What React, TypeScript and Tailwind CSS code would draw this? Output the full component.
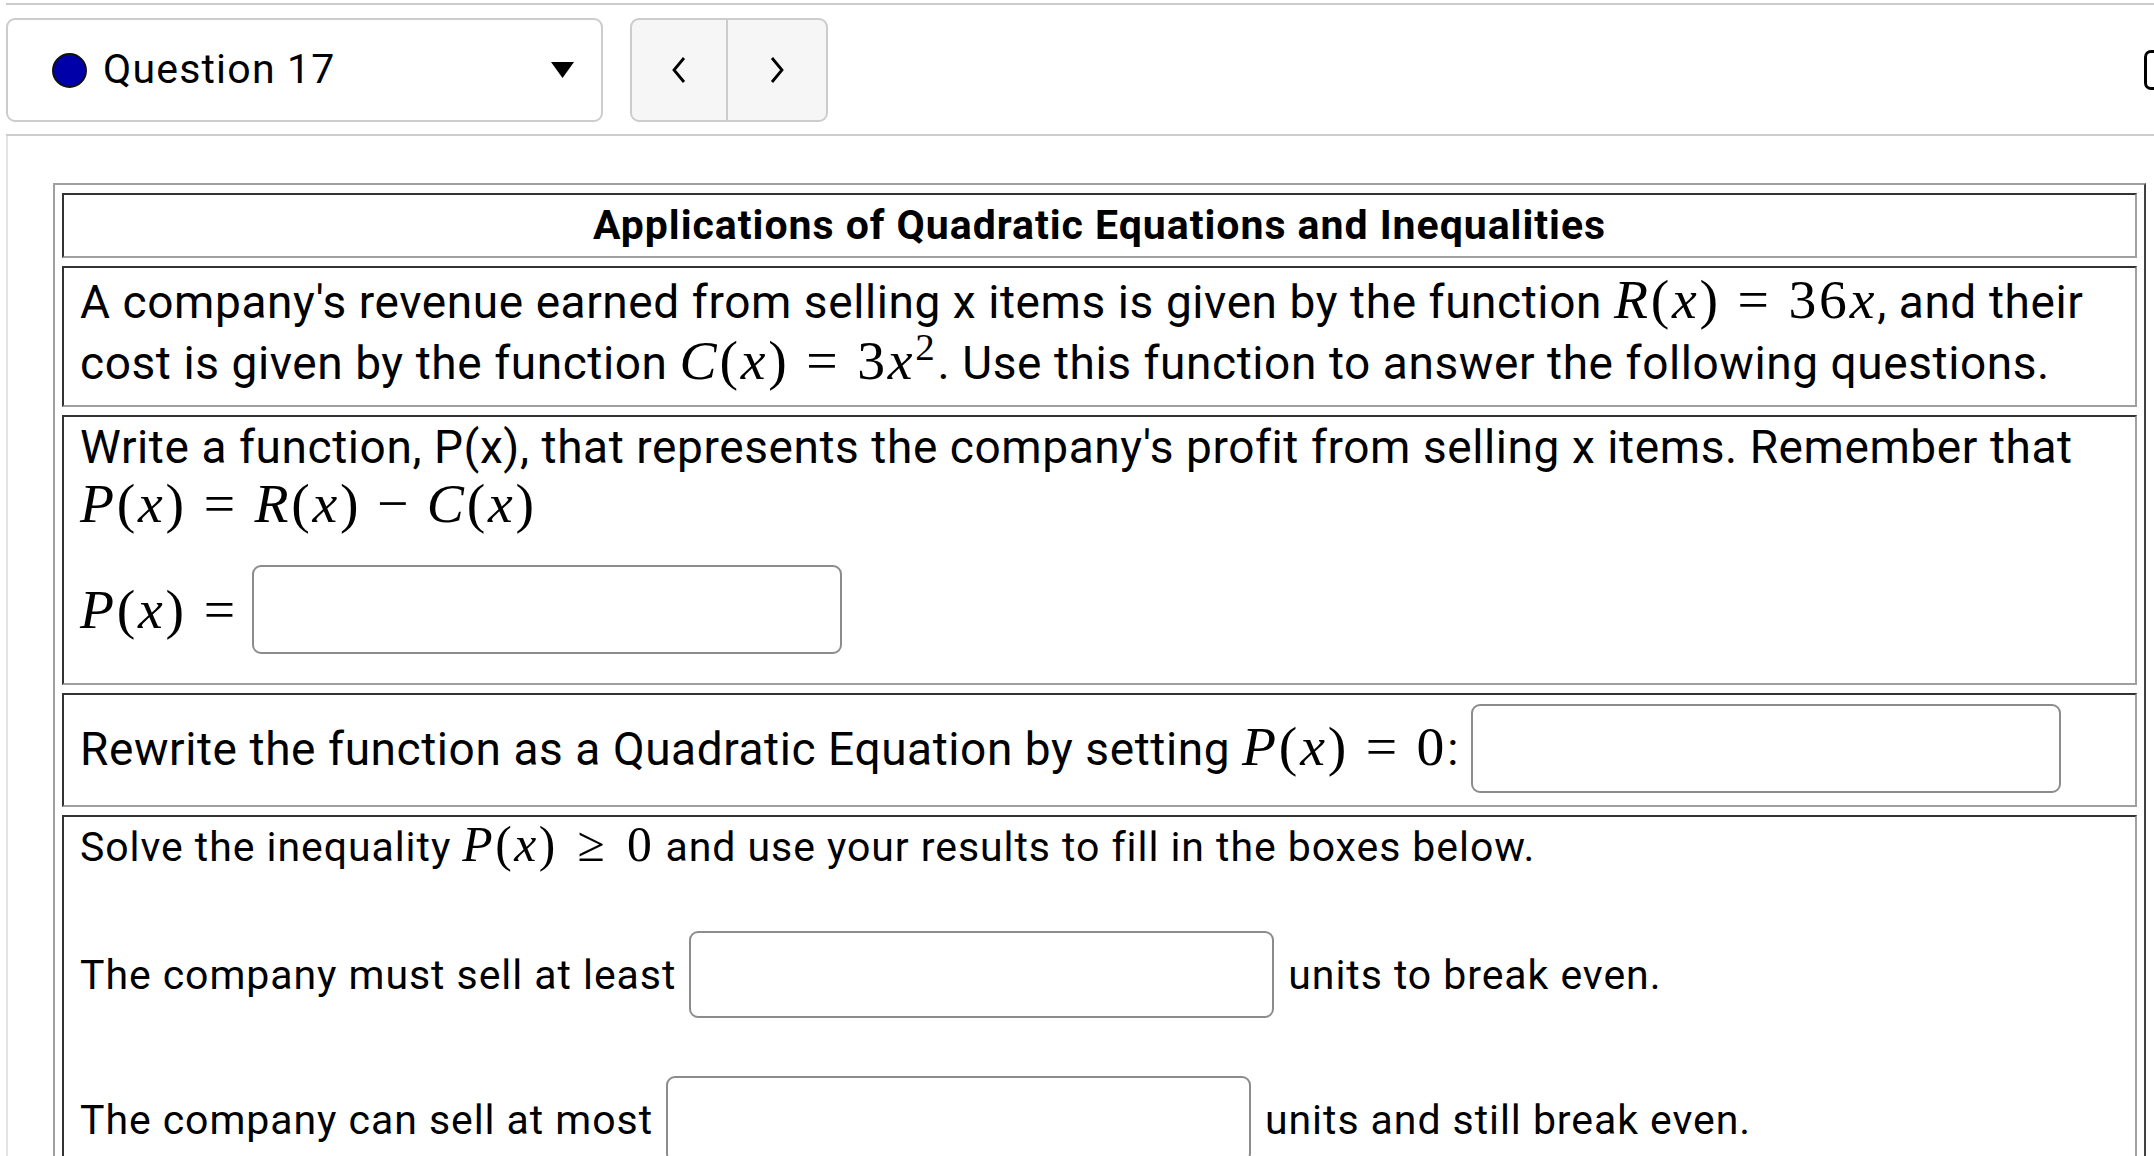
import React from "react";

// math pieces, set in a serif face at KaTeX's 1.21em
function M({ children }: { children: React.ReactNode }) {
  return (
    <span className="whitespace-nowrap font-['Liberation_Serif','DejaVu_Serif',serif] text-[1.21em] leading-none tracking-[0.05em]">
      {children}
    </span>
  );
}

function V({ children }: { children: React.ReactNode }) {
  return <i className="italic">{children}</i>;
}

function Rel({ children, wide = false }: { children: React.ReactNode; wide?: boolean }) {
  return <span className={wide ? "mx-[0.4em]" : "mx-[0.3em]"}>{children}</span>;
}

function Bin({ children }: { children: React.ReactNode }) {
  return <span className="mx-[0.28em]">{children}</span>;
}

function Fn({ n }: { n: string }) {
  return (
    <>
      <V>{n}</V>(<V>x</V>)
    </>
  );
}

function Box({ className = "" }: { className?: string }) {
  return (
    <input
      type="text"
      className={`shrink-0 rounded-[9px] border-2 border-[#8c8c8c] bg-white outline-none ${className}`}
    />
  );
}

const cell =
  "border-2 border-t-[#333333] border-l-[#333333] border-r-[#a0a0a0] border-b-[#a0a0a0] bg-white";

export default function App() {
  return (
    <div className="min-h-screen w-full overflow-hidden bg-white font-['Roboto','Liberation_Sans',sans-serif] text-black">
      {/* Header */}
      <div className="ml-[6px] mt-[3px] flex items-center border-y-2 border-[#cccccc] pb-[12px] pt-[13px]">
        <div className="flex h-[104px] w-[597px] items-center rounded-[9px] border-2 border-[#cccccc] pl-[44px] pr-[27px]">
          <span className="h-[35px] w-[35px] shrink-0 rounded-full border-2 border-[#111111] bg-[#0000a8]" />
          <span className="ml-[16px] text-[41px] tracking-[1.2px]">Question 17</span>
          <svg className="ml-auto" width="23" height="16" viewBox="0 0 23 16">
            <polygon points="0,0 23,0 11.5,16" fill="#000" />
          </svg>
        </div>
        <div className="ml-[27px] flex h-[104px] w-[198px] rounded-[9px] border-2 border-[#cccccc] bg-[#f6f6f6]">
          <button className="flex w-[96px] items-center justify-center border-r-2 border-[#cccccc]">
            <svg width="20" height="28" viewBox="0 0 20 28">
              <polyline points="15,2 5,14 15,26" fill="none" stroke="#000" strokeWidth="2.8" />
            </svg>
          </button>
          <button className="flex flex-1 items-center justify-center">
            <svg width="20" height="28" viewBox="0 0 20 28">
              <polyline points="5,2 15,14 5,26" fill="none" stroke="#000" strokeWidth="2.8" />
            </svg>
          </button>
        </div>
        <div className="ml-auto h-[40px] w-[10px] rounded-l-[7px] border-y-[3px] border-l-[3px] border-black" />
      </div>

      {/* Question body */}
      <div className="ml-[6px] border-l-2 border-[#e3e3e3] pl-[45px] pt-[47px]">
        <div className="flex w-[2093px] flex-col gap-[8px] border-2 border-b-[#404040] border-l-[#a0a0a0] border-r-[#404040] border-t-[#a0a0a0] px-[7px] py-[8px]">
          {/* Title */}
          <div className={`${cell} h-[65px] text-center text-[41px] font-bold leading-[61px] tracking-[0.97px]`}>
            Applications of Quadratic Equations and Inequalities
          </div>

          {/* Intro */}
          <div className={`${cell} h-[141px] px-[16px] pt-[4px] text-[46px] leading-[61px] tracking-[0.58px]`}>
            A company's revenue earned from selling x items is given by the function{" "}
            <M>
              <Fn n="R" />
              <Rel>=</Rel>36<V>x</V>
            </M>
            , and their
            <br />
            cost is given by the function{" "}
            <M>
              <Fn n="C" />
              <Rel>=</Rel>3<V>x</V>
              <sup className="text-[0.7em]">2</sup>
            </M>
            . Use this function to answer the following questions.
          </div>

          {/* P(x) */}
          <div className={`${cell} h-[270px] px-[16px] pt-[2px] text-[46px] leading-[57px] tracking-[0.58px]`}>
            <div>
              Write a function, P(x), that represents the company's profit from selling x items. Remember that
              <br />
              <M>
                <Fn n="P" />
                <Rel>=</Rel>
                <Fn n="R" />
                <Bin>−</Bin>
                <Fn n="C" />
              </M>
            </div>
            <div className="mt-[30px] flex items-center">
              <M>
                <Fn n="P" />
                <span className="ml-[0.3em]">=</span>
              </M>
              <Box className="ml-[14px] h-[89px] w-[590px]" />
            </div>
          </div>

          {/* Quadratic equation */}
          <div className={`${cell} flex h-[114px] items-center px-[16px] pb-[4px] text-[46px] leading-[57px] tracking-[0.58px]`}>
            <span>
              Rewrite the function as a Quadratic Equation by setting{" "}
              <M>
                <Fn n="P" />
                <Rel>=</Rel>0
              </M>
              :
            </span>
            <Box className="ml-[12px] h-[89px] w-[590px]" />
          </div>

          {/* Inequality */}
          <div className={`${cell} px-[16px] pb-[40px] pt-[3px] text-[41px] leading-[52px] tracking-[0.94px]`}>
            <div>
              Solve the inequality{" "}
              <M>
                <Fn n="P" />
                <Rel wide>≥</Rel>0
              </M>{" "}
              and use your results to fill in the boxes below.
            </div>
            <div className="mt-[58px] flex items-center">
              <span>The company must sell at least</span>
              <Box className="ml-[13px] h-[87px] w-[585px]" />
              <span className="ml-[14px]">units to break even.</span>
            </div>
            <div className="mt-[58px] flex items-center">
              <span>The company can sell at most</span>
              <Box className="ml-[13px] h-[87px] w-[585px]" />
              <span className="ml-[14px]">units and still break even.</span>
            </div>
          </div>
        </div>
      </div>
    </div>
  );
}
